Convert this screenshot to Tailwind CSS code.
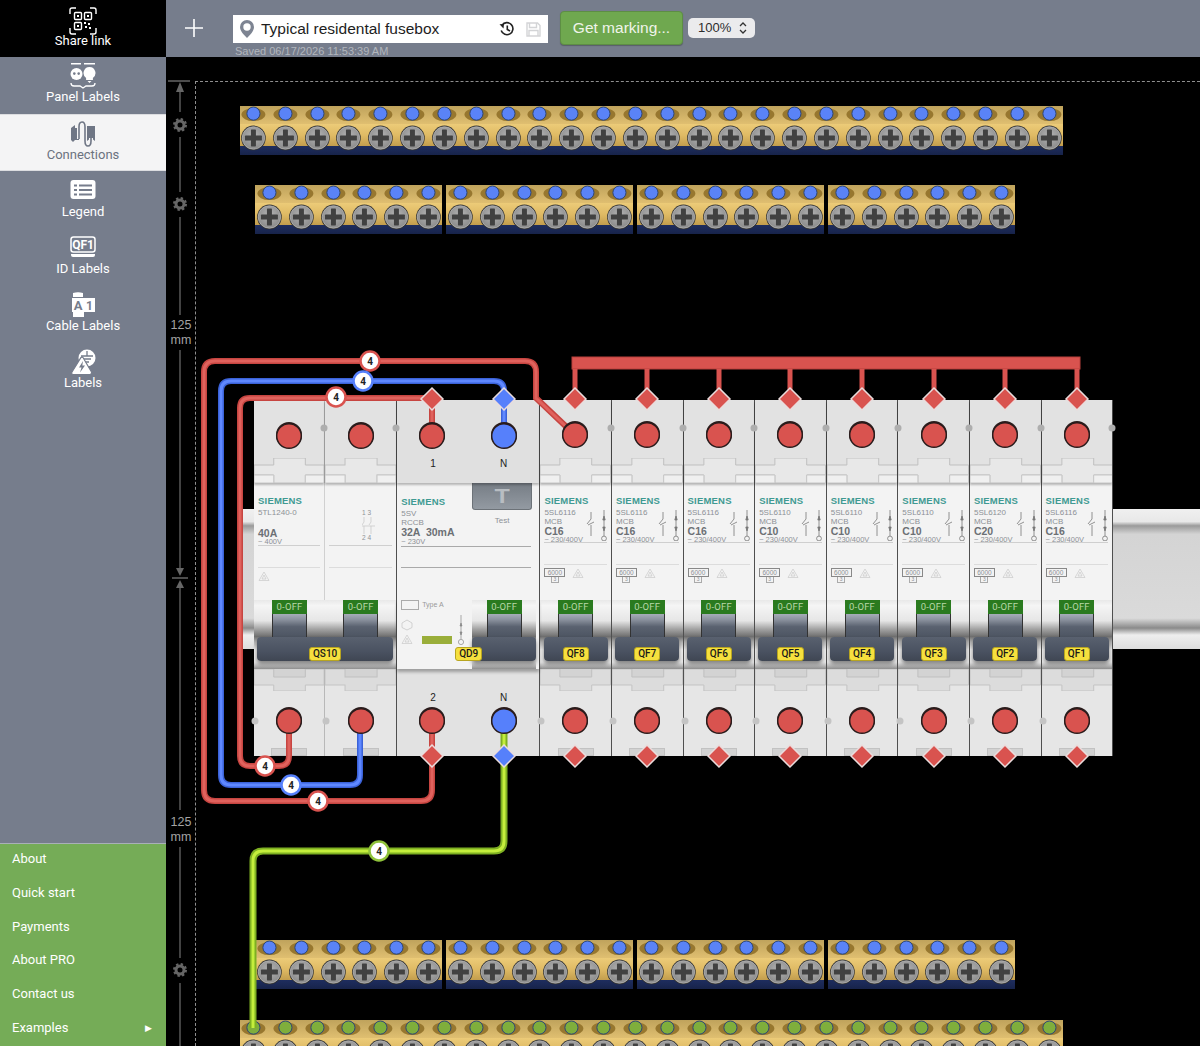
<!DOCTYPE html>
<html lang="en">
<head>
<meta charset="UTF-8">
<title>Typical residental fusebox</title>
<script src="https://cdn.jsdelivr.net/npm/@tailwindcss/browser@4"></script>
</head>
<body class="bg-black">
<!-- shared drawings -->
<svg width="0" height="0" class="absolute">
  <defs>
    <radialGradient id="screwFace" cx="50%" cy="40%" r="60%"><stop offset="0" stop-color="#b4b4b4"/><stop offset="1" stop-color="#8b8b8b"/></radialGradient>
    <symbol id="terminal" viewBox="0 0 32 49">
      <ellipse cx="13.5" cy="8.5" rx="12" ry="6.5" fill="#97772f"/>
      <circle cx="13.5" cy="7.5" r="6.6" fill="currentColor" stroke="#2c4676" stroke-width="1"/>
      <circle cx="13.5" cy="32" r="12.4" fill="#333"/>
      <circle cx="13.5" cy="32" r="11.3" fill="url(#screwFace)" stroke="#bdbdbd" stroke-width=".7"/>
      <rect x="5" y="29.6" width="17" height="5" rx=".6" fill="#414141"/>
      <rect x="11" y="23.5" width="5" height="17" rx=".6" fill="#414141"/>
    </symbol>
  </defs>
</svg>

<div class="flex w-[1200px] h-[1046px] overflow-hidden font-['Roboto',sans-serif]">
  <!-- left menu -->
  <aside class="w-[166px] shrink-0 flex flex-col bg-[#767d8c] text-white text-[13px] leading-[16px]">
    <a class="h-[57px] bg-black flex flex-col items-center pt-[7px]">
      <svg class="w-[28px] h-[28px] mb-[-2px]" viewBox="0 0 28 28" fill="none" stroke="#fff" stroke-width="1.4">
        <path d="M1 7V3Q1 1 3 1H7M21 1H25Q27 1 27 3V7M1 21V25Q1 27 3 27H7M27 21V25Q27 27 25 27H21"/>
        <rect x="5.5" y="5.5" width="7" height="7" rx="1"/><rect x="15.5" y="5.5" width="7" height="7" rx="1"/><rect x="5.5" y="15.5" width="7" height="7" rx="1"/>
        <path fill="#fff" stroke="none" d="M8 8h2v2H8zM18 8h2v2h-2zM8 18h2v2H8zM15 15h2v2h-2zM19 16h2v2h-2zM16 19h2v2h-2zM20 20h2v2h-2z"/>
      </svg>
      <span>Share link</span>
    </a>
    <a class="h-[57px] flex flex-col items-center pt-[6px]">
      <svg class="w-[26px] h-[26px]" viewBox="0 0 26 26" fill="#fff">
        <path d="M1 0h10v1.4H1zM14 0h11v1.4H14z"/>
        <circle cx="6.5" cy="11" r="6"/><circle cx="4.3" cy="10.6" r="1.3" fill="#767d8c"/><circle cx="8.7" cy="10.6" r="1.3" fill="#767d8c"/>
        <path d="M19.5 4a6 6 0 0 1 3.4 10.9V17h-6.8v-2.1A6 6 0 0 1 19.5 4zM17.5 18h4l-2 2z"/>
        <path d="M1 20Q1 23 4 23H10L13 25 16 23H22Q25 23 25 20" fill="none" stroke="#fff" stroke-width="1.3"/>
      </svg>
      <span>Panel Labels</span>
    </a>
    <a class="h-[57px] flex flex-col items-center pt-[6px] bg-[#f4f4f5] border-y border-[#dcdde0] text-[#6b7280]">
      <svg class="w-[26px] h-[26px]" viewBox="0 0 26 26" fill="#6f7685">
        <path d="M1 7L5 4V7H9V19H5L3 21 1 19z"/><path d="M17 5H25V20L21 17 17 20z"/>
        <path d="M9 18V6Q9 1 12 1T15 6V20Q15 25 18 25T21 20V17" fill="none" stroke="#f4f4f5" stroke-width="4"/>
        <path d="M9 18V6Q9 1 12 1T15 6V20Q15 25 18 25T21 20V17" fill="none" stroke="#6f7685" stroke-width="1.6"/>
      </svg>
      <span>Connections</span>
    </a>
    <a class="h-[57px] flex flex-col items-center pt-[8px]">
      <svg class="w-[26px] h-[22px] mb-[3px]" viewBox="0 0 26 22">
        <rect x="0.5" y="1" width="25" height="19" rx="3" fill="#fff"/>
        <path fill="#767d8c" d="M4 5.5h3v2H4zM9 5.5h13v2H9zM4 10h3v2H4zM9 10h13v2H9zM4 14.5h3v2H4zM9 14.5h13v2H9z"/>
      </svg>
      <span>Legend</span>
    </a>
    <a class="h-[57px] flex flex-col items-center pt-[8px]">
      <svg class="w-[26px] h-[22px] mb-[3px]" viewBox="0 0 26 22">
        <rect x="1" y="1" width="24" height="15" rx="2.5" fill="none" stroke="#fff" stroke-width="1.5"/>
        <text x="13" y="13" text-anchor="middle" fill="#fff" font-size="12" font-weight="700" font-family="Roboto,sans-serif">QF1</text>
        <path d="M1 18H25V19Q25 21 23 21H3Q1 21 1 19z" fill="#fff"/>
      </svg>
      <span>ID Labels</span>
    </a>
    <a class="h-[57px] flex flex-col items-center pt-[7px]">
      <svg class="w-[26px] h-[26px]" viewBox="0 0 26 26">
        <path fill="#fff" d="M3 1Q8 -.5 13 1V5H3zM2 6H25V20H14V25H3V20H2z"/>
        <text x="8" y="18" text-anchor="middle" fill="#767d8c" font-size="13" font-weight="700" font-family="Roboto,sans-serif">A</text>
        <text x="19.5" y="17.5" text-anchor="middle" fill="#767d8c" font-size="12" font-weight="700" font-family="Roboto,sans-serif">1</text>
      </svg>
      <span>Cable Labels</span>
    </a>
    <a class="h-[57px] flex flex-col items-center pt-[7px]">
      <svg class="w-[26px] h-[26px]" viewBox="0 0 26 26">
        <circle cx="17" cy="9" r="8.5" fill="#fff"/>
        <path stroke="#767d8c" stroke-width="1.3" d="M17 2V7M11 7H23M13 10H21M15 13H19"/>
        <path fill="#fff" stroke="#767d8c" stroke-width="1.2" d="M11 8.5Q12 7.5 13 8.5L21.5 23Q22 25 20 25.500H3Q1 25 2 23z"/>
        <path fill="#767d8c" d="M13 12L9 18.500H11.500L10 23.500 15 16.500H12.300z"/>
      </svg>
      <span>Labels</span>
    </a>
    <nav class="mt-auto h-[203px] bg-[#75ac57] border-t border-[#a9b0b8] flex flex-col">
      <a class="h-[33.8px] pl-3 pt-[7px] shrink-0">About</a>
      <a class="h-[33.8px] pl-3 pt-[7px] shrink-0">Quick start</a>
      <a class="h-[33.8px] pl-3 pt-[7px] shrink-0">Payments</a>
      <a class="h-[33.8px] pl-3 pt-[7px] shrink-0">About PRO</a>
      <a class="h-[33.8px] pl-3 pt-[7px] shrink-0">Contact us</a>
      <a class="h-[33.8px] pl-3 pr-[14px] pt-[7px] shrink-0 flex justify-between">Examples <span class="text-[9px]">&#9654;</span></a>
    </nav>
  </aside>

  <main class="flex-1 flex flex-col min-w-0">
    <!-- toolbar -->
    <header class="h-[57px] shrink-0 bg-[#767d8c] flex items-start pl-[19px] font-['Liberation_Sans',sans-serif]">
      <svg class="w-[18px] h-[18px] mt-[19px] mr-[30px]" viewBox="0 0 18 18" stroke="#fff" stroke-width="1.6"><path d="M9 0V18M0 9H18"/></svg>
      <div class="flex flex-col mt-[15px] w-[315px]">
        <div class="h-[28px] bg-white flex items-center pl-[7px] pr-[7px] text-[15.5px] text-[#1d1d1d]">
          <svg class="w-[14px] h-[18px] mr-[7px]" viewBox="0 0 14 18"><path fill="#7d8492" d="M7 0a7 7 0 0 1 7 7c0 4-4 8-7 11-3-3-7-7-7-11a7 7 0 0 1 7-7z"/><circle cx="7" cy="7" r="3.7" fill="#fff"/></svg>
          <span class="flex-1">Typical residental fusebox</span>
          <svg class="w-[16px] h-[16px] mr-[11px]" viewBox="0 0 16 16" fill="none" stroke="#222" stroke-width="1.6"><path d="M3 4.200A6 6 0 1 1 2.200 9.500"/><path fill="#222" stroke="none" d="M0.500 3.200L5 3 4.500 7.500z"/><path d="M8.300 4.500V8.500L11 10"/></svg>
          <svg class="w-[15px] h-[15px]" viewBox="0 0 15 15" fill="none" stroke="#d3d4d6" stroke-width="1.4"><path d="M1 1H11.500L14 3.500V14H1z"/><path d="M3.500 1V5.500H10.500V1M3 14V8.500H12V14"/></svg>
        </div>
        <span class="text-[11px] leading-[13px] text-[#b2b6bd] pl-[2px] mt-[2px]">Saved 06/17/2026 11:53:39 AM</span>
      </div>
      <button class="mt-[11px] ml-[12px] w-[123px] h-[34px] rounded-[4px] bg-[#6fa84f] border border-[#5d8e44] text-[15.5px] text-[#f0f4ea] shadow-[0_1px_1px_rgba(0,0,0,.25)]">Get marking...</button>
      <div class="mt-[18px] ml-[5px] w-[67px] h-[20px] rounded-[5px] bg-[#ebebed] flex items-center justify-between pl-[10px] pr-[8px] text-[13px] text-[#2d2d2d]">
        100%
        <svg class="w-[8px] h-[12px]" viewBox="0 0 8 12" fill="none" stroke="#333" stroke-width="1.300"><path d="M1 4L4 1 7 4M1 8L4 11 7 8"/></svg>
      </div>
    </header>

    <!-- drawing canvas: everything inside sits at its place on the panel -->
    <section class="relative flex-1 bg-black overflow-hidden" id="canvas">
      <div class="absolute left-[29px] top-[24px] right-0 bottom-0 border-l border-t border-dashed border-[#8f8f8f]"></div>

      <div id="bar1" class="absolute left-[74px] top-[49px] h-[49px]"></div>
      <div id="bar2" class="absolute left-[89px] top-[128px] h-[50px] flex gap-[4px]"></div>
      <div id="bar3" class="absolute left-[89px] top-[883px] h-[50px] flex gap-[4px]"></div>
      <div id="bar4" class="absolute left-[74px] top-[963px] h-[49px]"></div>

      <div class="absolute left-[74px] top-[452px] w-[14px] h-[140px] bg-[linear-gradient(180deg,#f0f0f0_0%,#e8e8e8_9%,#9a9a9a_12%,#d4d4d4_18%,#dadada_78%,#8a8a8a_85%,#eeeeee_90%,#dddddd_100%)]"></div>
      <div class="absolute left-[947px] top-[452px] right-0 h-[140px] bg-[linear-gradient(180deg,#f0f0f0_0%,#e8e8e8_9%,#9a9a9a_12%,#d4d4d4_18%,#dadada_78%,#8a8a8a_85%,#eeeeee_90%,#dddddd_100%)]"></div>

      <div id="modules" class="absolute left-[88px] top-[343px] h-[356px] flex font-['Liberation_Sans',sans-serif]"></div>

      <svg id="overlay" class="absolute left-0 top-0" width="1034" height="989" viewBox="166 57 1034 989" fill="none"></svg>
    </section>
  </main>
</div>

<script>
const BAND = "h-[69px] bg-[linear-gradient(180deg,#e8e8e8_0%,#f5f5f5_8%,#e6e6e6_30%,#a4a4a4_42%,#6f6f6f_53%,#b4b4b4_61%,#efefef_72%,#e8e8e8_90%,#8e8e8e_100%)]";

function notchTop() {
  return `<svg class="w-full h-[25px] block" viewBox="0 0 71 25" preserveAspectRatio="none">
    <path d="M0 7H20V0H52V7H71V17H52V25H20V17H0z" fill="#e8e8e8" stroke="#c0c0c0"/>
    <path d="M0 17H20V25H0zM52 17H71V25H52z" fill="#f0f0f0" stroke="#c8c8c8"/></svg>`;
}
function notchBottom() {
  return `<svg class="w-full h-[22px] block" viewBox="0 0 71 22" preserveAspectRatio="none">
    <path d="M0 0H71V16H52V22H20V16H0z" fill="#dcdcdc" stroke="#c4c4c4"/>
    <path d="M20 0V8H52V0" fill="#d3d3d3" stroke="#c0c0c0"/></svg>`;
}
function poleTop() {
  return `<div class="h-[83px] bg-[#e2e2e2] flex flex-col justify-end shadow-[0_2px_2px_rgba(0,0,0,.25)] relative">${notchTop()}</div>`;
}
function poleBottom() {
  return `<div class="h-[87px] bg-[#e6e6e6] flex flex-col justify-between items-center">${notchBottom()}<div class="w-[36px] h-[8px] bg-[#d2d2d2] border border-[#c2c2c2]"></div></div>`;
}
function toggle() {
  return `<div class="flex flex-col items-center w-[35px]">
    <div class="w-full h-[14px] bg-[#2a7a1f] text-[#b8d8a8] text-[9.500px] leading-[14px] text-center font-['Roboto',sans-serif] tracking-[.2px]">0-OFF</div>
    <div class="w-full h-[23px] bg-[linear-gradient(180deg,#a6adb8_0%,#8a919d_25%,#5a6270_55%,#4d5562_100%)] border-x border-[#333]"></div>
  </div>`;
}
function handle(w, label, shift) {
  return `<div class="${w} h-[24px] rounded-[4px] bg-[linear-gradient(180deg,#59616f_0%,#4a5261_60%,#3f4653_100%)] shadow-[0_3px_4px_rgba(0,0,0,.45)] flex items-end justify-center ${shift}">
    <span class="h-[14px] px-[3px] rounded-[3px] bg-[#f6e03e] text-[#1a1a1a] text-[10px] leading-[12px] font-['Roboto',sans-serif] font-medium border border-[#b8a520]">${label}</span></div>`;
}
function recycle() {
  return `<svg class="w-[12px] h-[11px]" viewBox="0 0 12 11" fill="none" stroke="#c8c8c8" stroke-width=".7"><path d="M6 1L11 9.500H1zM6 4L8 8H4z"/></svg>`;
}
function mcbFace(model, curve) {
  return `<div class="h-[117px] bg-[#f3f3f3] px-[4px] pt-[12px] text-[#8d9196]">
    <div class="text-[9.500px] leading-[12px] font-bold text-[#3f9a92] tracking-[.2px]">SIEMENS</div>
    <div class="flex justify-between h-[33px] mt-[1px]">
      <div class="text-[8px] leading-[9px]">
        <div>${model}</div><div>MCB</div>
        <div class="text-[10.500px] leading-[10px] font-bold text-[#6c7075]">${curve}</div>
        <div class="text-[7.500px] leading-[8px] whitespace-nowrap">~ 230/400V</div>
      </div>
      <svg class="w-[24px] h-[33px] shrink-0" viewBox="0 0 24 33" fill="none" stroke="#777" stroke-width=".8">
        <path d="M8 4V11L4 16M8 17V28M5 17L11 14"/><path d="M21 2V28"/><path fill="#777" d="M21 8L19.800 12H22.200zM21 23L19.800 19H22.200z"/><circle cx="21" cy="30.500" r="2.400"/>
      </svg>
    </div>
    <div class="border-t border-[#cfcfcf] mt-[1px] h-[22px]"></div>
    <div class="border-t border-[#dcdcdc] pt-[3px] flex items-start gap-[7px]">
      <div class="flex flex-col items-center">
        <div class="w-[21px] h-[9px] border border-[#888] text-[6.500px] leading-[7px] text-center">6000</div>
        <div class="w-[8px] h-[6px] border border-t-0 border-[#aaa] text-[5px] leading-[5px] text-center">3</div>
      </div>
      ${recycle()}
    </div>
  </div>`;
}
function mcb(model, curve, label) {
  return `<div class="w-[71.6px] h-[356px] border-r border-[#4f4f4f] flex flex-col shrink-0">
    ${poleTop()}${mcbFace(model, curve)}
    <div class="${BAND} flex flex-col items-center">${toggle()}${handle("w-[64px]", label, "")}</div>
    ${poleBottom()}</div>`;
}
function isolator() {
  const halfBand = `<div class="w-1/2 flex justify-center">${toggle()}</div>`;
  return `<div class="w-[143.2px] h-[356px] border-r border-[#4f4f4f] flex flex-col shrink-0">
    <div class="flex"><div class="w-1/2 border-r border-[#b8b8b8]">${poleTop()}</div><div class="w-1/2">${poleTop()}</div></div>
    <div class="h-[117px] bg-[#f3f3f3] flex text-[#8d9196]">
      <div class="w-1/2 border-r border-[#d0d0d0] px-[4px] pt-[12px]">
        <div class="text-[9.500px] leading-[12px] font-bold text-[#3f9a92] tracking-[.2px]">SIEMENS</div>
        <div class="text-[8px] leading-[10px] mt-[1px]">5TL1240-0</div>
        <div class="text-[10.500px] leading-[10px] font-bold text-[#6c7075] mt-[10px]">40A</div>
        <div class="text-[7.500px] leading-[7px]">~ 400V</div>
        <div class="border-t border-[#cfcfcf] h-[22px]"></div>
        <div class="border-t border-[#dcdcdc] pt-[3px]">${recycle()}</div>
      </div>
      <div class="w-1/2 px-[4px] pt-[26px]">
        <div class="text-[6.500px] leading-[8px] pl-[33px] h-[33px] whitespace-nowrap">
          1 3
          <svg class="w-[13px] h-[17px] block" viewBox="0 0 13 17" fill="none" stroke="#c4c4c4" stroke-width=".7"><path d="M2 0V5L0 8M2 9V17M9 0V5L7 8M9 9V17M0 9H13"/></svg>
          2 4
        </div>
        <div class="border-t border-[#cfcfcf] mt-[3px] h-[22px]"></div>
        <div class="border-t border-[#dcdcdc]"></div>
      </div>
    </div>
    <div class="${BAND} flex flex-col items-center">
      <div class="flex w-full">${halfBand}${halfBand}</div>
      ${handle("w-[136px]", "QS10", "")}
    </div>
    <div class="flex"><div class="w-1/2 border-r border-[#b8b8b8]">${poleBottom()}</div><div class="w-1/2">${poleBottom()}</div></div>
  </div>`;
}
function rcd() {
  return `<div class="w-[143.2px] h-[356px] border-r border-[#4f4f4f] flex flex-col shrink-0">
    <div class="h-[83px] bg-[#e0e0e0] flex justify-around pt-[56px] pl-[1px] text-[10px] text-[#222] shadow-[0_2px_2px_rgba(0,0,0,.25)] relative"><span>1</span><span>N</span></div>
    <div class="h-[117px] bg-[#f3f3f3] flex text-[#8d9196] pl-[4px]">
      <div class="w-[71px] pt-[13px]">
        <div class="text-[9.500px] leading-[12px] font-bold text-[#3f9a92] tracking-[.2px]">SIEMENS</div>
        <div class="text-[8px] leading-[9px] mt-[1px]">5SV<br>RCCB</div>
        <div class="text-[10.500px] leading-[11px] font-bold text-[#6c7075] whitespace-nowrap">32A &nbsp;30mA</div>
        <div class="text-[7.500px] leading-[8px]">~ 230V</div>
      </div>
      <div class="flex-1 flex flex-col items-start">
        <div class="w-[60px] h-[27px] rounded-b-[3px] bg-[linear-gradient(180deg,#767d85,#939aa2)] border border-[#6c7278] border-t-0 text-center text-[#b8bdc2] text-[20px] leading-[26px] font-bold"><span class="inline-block scale-x-125">T</span></div>
        <div class="w-[60px] text-center text-[8px] mt-[5px]">Test</div>
      </div>
    </div>
    <div class="h-0 relative"><div class="absolute left-[4px] right-[8px] top-[-54px] border-t border-[#a9a9a9] h-[22px] border-b"></div></div>
    <div class="h-[69px] bg-[#f3f3f3] flex shadow-[0_3px_3px_rgba(0,0,0,.3)] relative">
      <div class="w-[75px] pl-[4px] text-[#9a9a9a] flex flex-col">
        <div class="flex items-center gap-[3px] text-[7px] leading-[10px]"><span class="w-[18px] h-[10px] border border-[#aaa]"></span>Type A</div>
        <div class="flex mt-[5px] items-end">
          <div class="flex flex-col gap-[3px] w-[21px]">
            <svg class="w-[12px] h-[12px]" viewBox="0 0 12 12" fill="none" stroke="#c8c8c8" stroke-width=".8"><path d="M6 1L11 4V8.500L6 11 1 8.500V4z"/></svg>
            ${recycle()}
          </div>
          <div class="w-[30px] h-[8px] bg-[#9aae3a] mb-[1px]"></div>
          <svg class="w-[10px] h-[30px] ml-[4px]" viewBox="0 0 10 30" fill="none" stroke="#888" stroke-width=".7"><path d="M5 0V24"/><path fill="#888" d="M5 8L4 11H6zM5 20L4 17H6z"/><circle cx="5" cy="27" r="2.600"/></svg>
        </div>
      </div>
      <div class="w-[64px] flex flex-col items-center ${BAND}">
        ${toggle()}${handle("w-[64px]", "QD9", "justify-start [&>span]:-ml-[17px]")}
      </div>
    </div>
    <div class="h-[87px] bg-[#e2e2e2] flex justify-around pt-[21px] pl-[1px] text-[10px] text-[#222]"><span>2</span><span>N</span></div>
  </div>`;
}

function strip(count, dot) {
  let cells = "";
  for (let i = 0; i < count; i++) {
    cells += `<svg class="w-[31.840px] h-[49px] shrink-0 ${dot}"><use href="#terminal" width="31.840" height="49"/></svg>`;
  }
  return cells;
}
function bar(w, count, dot, pad) {
  return `<div class="${w} h-[49px] ${pad} flex overflow-hidden bg-[linear-gradient(180deg,#bfa35c_0%,#dfbe70_36%,#eccb78_37%,#dfba64_60%,#c39e4e_81%,#1e2d5e_82%,#17234a_100%)]">${strip(count, dot)}</div>`;
}
document.getElementById("bar1").innerHTML = bar("w-[823px]", 26, "text-[#5a83f7]", "");
document.getElementById("bar4").innerHTML = bar("w-[823px]", 26, "text-[#7fae3c]", "");
for (const id of ["bar2", "bar3"]) {
  let html = "";
  for (let i = 0; i < 4; i++) html += bar("w-[187px]", 6, "text-[#5a83f7]", "pl-[1px]");
  document.getElementById(id).innerHTML = html;
}

const breakers = [["5SL6116","C16","QF8"],["5SL6116","C16","QF7"],["5SL6116","C16","QF6"],["5SL6110","C10","QF5"],["5SL6110","C10","QF4"],["5SL6110","C10","QF3"],["5SL6120","C20","QF2"],["5SL6116","C16","QF1"]];
document.getElementById("modules").innerHTML = isolator() + rcd() + breakers.map(b => mcb(b[0], b[1], b[2])).join("");

// wires, terminals, ruler
const RED = "#d9534f", BLUE = "#5680fb";
const columns = [575, 647, 719, 790, 862, 934, 1005, 1077];
function wire(d, outer, inner) {
  return `<path d="${d}" stroke="${outer}" stroke-width="6"/><path d="${d}" stroke="${inner}" stroke-width="3"/>`;
}
function mark(x, y, ring) {
  return `<circle cx="${x}" cy="${y}" r="9.500" fill="#fff" stroke="${ring}" stroke-width="2.500"/>
    <text x="${x}" y="${y + 3.500}" text-anchor="middle" fill="#222" font-size="10" font-weight="700" font-family="Roboto,sans-serif">4</text>`;
}
function term(x, y, fill) {
  return `<circle cx="${x}" cy="${y - 1}" r="13" fill="#2a1c1c"/><circle cx="${x}" cy="${y}" r="12.300" fill="${fill}" stroke="#2a1c1c" stroke-width="1.500"/>`;
}
function diamond(x, y, fill) {
  return `<path d="M${x} ${y - 11}L${x + 11} ${y} ${x} ${y + 11} ${x - 11} ${y}z" fill="${fill}" stroke="#eadcdc" stroke-width="1.500"/>`;
}
function gear(y) {
  return `<circle cx="180" cy="${y}" r="4" stroke="#666" stroke-width="3"/><circle cx="180" cy="${y}" r="5.800" stroke="#666" stroke-width="2.400" stroke-dasharray="2.300 2.250"/>`;
}
let s = "";
// ruler
s += `<path d="M168 81H190M180 91V112M180 137V192M180 217V315M180 350V572M180 585V810M180 847V958M180 983V1046M172 578H188" stroke="#666" stroke-width="1.300"/>`;
s += `<path d="M180 82L176 92H184zM180 576L176 568H184zM180 580L176 588H184z" fill="#666"/>`;
s += gear(125) + gear(204) + gear(970);
s += `<g fill="#a3a3a3" font-size="12.500" font-family="Liberation Sans,sans-serif" text-anchor="middle">
  <text x="181" y="328.500">125</text><text x="181" y="343.500">mm</text><text x="181" y="825.500">125</text><text x="181" y="840.500">mm</text></g>`;
// edge dots of the modules
for (const x of [325, 397, 612, 684, 755, 827, 899, 970, 1042, 1113]) s += `<circle cx="${x - 1}" cy="428" r="3.500" fill="#aeaeae"/>`;
for (const x of [254, 325, 540, 612, 684, 755, 827, 899, 970, 1042]) s += `<circle cx="${x + 1}" cy="721" r="3.500" fill="#c4c4c4"/>`;
// wires
s += wire("M432 721V790Q432 801 421 801H215Q204 801 204 790V372Q204 361 215 361H525Q536 361 536 372V398L575 435", "#c74541", "#e0625d");
s += wire("M504 436V391Q504 381 494 381H231Q221 381 221 391V775Q221 785 231 785H350Q360 785 360 775V721", "#3b62d8", "#5f88ff");
s += wire("M432 435V398H250Q240 398 240 408V756Q240 766 250 766H279Q289 766 289 756V721", "#c74541", "#e0625d");
s += `<path d="M504 721V841Q504 851 494 851H263Q253 851 253 861V1028" stroke="#7eb022" stroke-width="7"/><path d="M504 721V841Q504 851 494 851H263Q253 851 253 861V1028" stroke="#c4ee3c" stroke-width="3"/>`;
// bus bar
s += `<rect x="572" y="357" width="508" height="12" fill="${RED}" stroke="#b8403c"/>`;
for (const x of columns) s += `<rect x="${x - 2.500}" y="369" width="5" height="30" fill="${RED}"/>`;
// terminals
for (const x of [289, 361, 432]) s += term(x, 436, RED);
s += term(504, 436, BLUE);
for (const x of columns) s += term(x, 435, RED);
for (const x of [289, 361, 432]) s += term(x, 721, RED);
s += term(504, 721, BLUE);
for (const x of columns) s += term(x, 721, RED);
// diamonds
s += diamond(432, 399, RED) + diamond(504, 399, BLUE) + diamond(432, 756, RED) + diamond(504, 756, BLUE);
for (const x of columns) s += diamond(x, 399, RED) + diamond(x, 756, RED);
// wire marks
s += mark(370, 361, RED) + mark(363, 381, BLUE) + mark(336, 397, RED) + mark(265, 766, RED) + mark(291, 785, BLUE) + mark(318, 801, RED) + mark(379, 851, "#8fc23a");
document.getElementById("overlay").innerHTML = s;
</script>
</body>
</html>
